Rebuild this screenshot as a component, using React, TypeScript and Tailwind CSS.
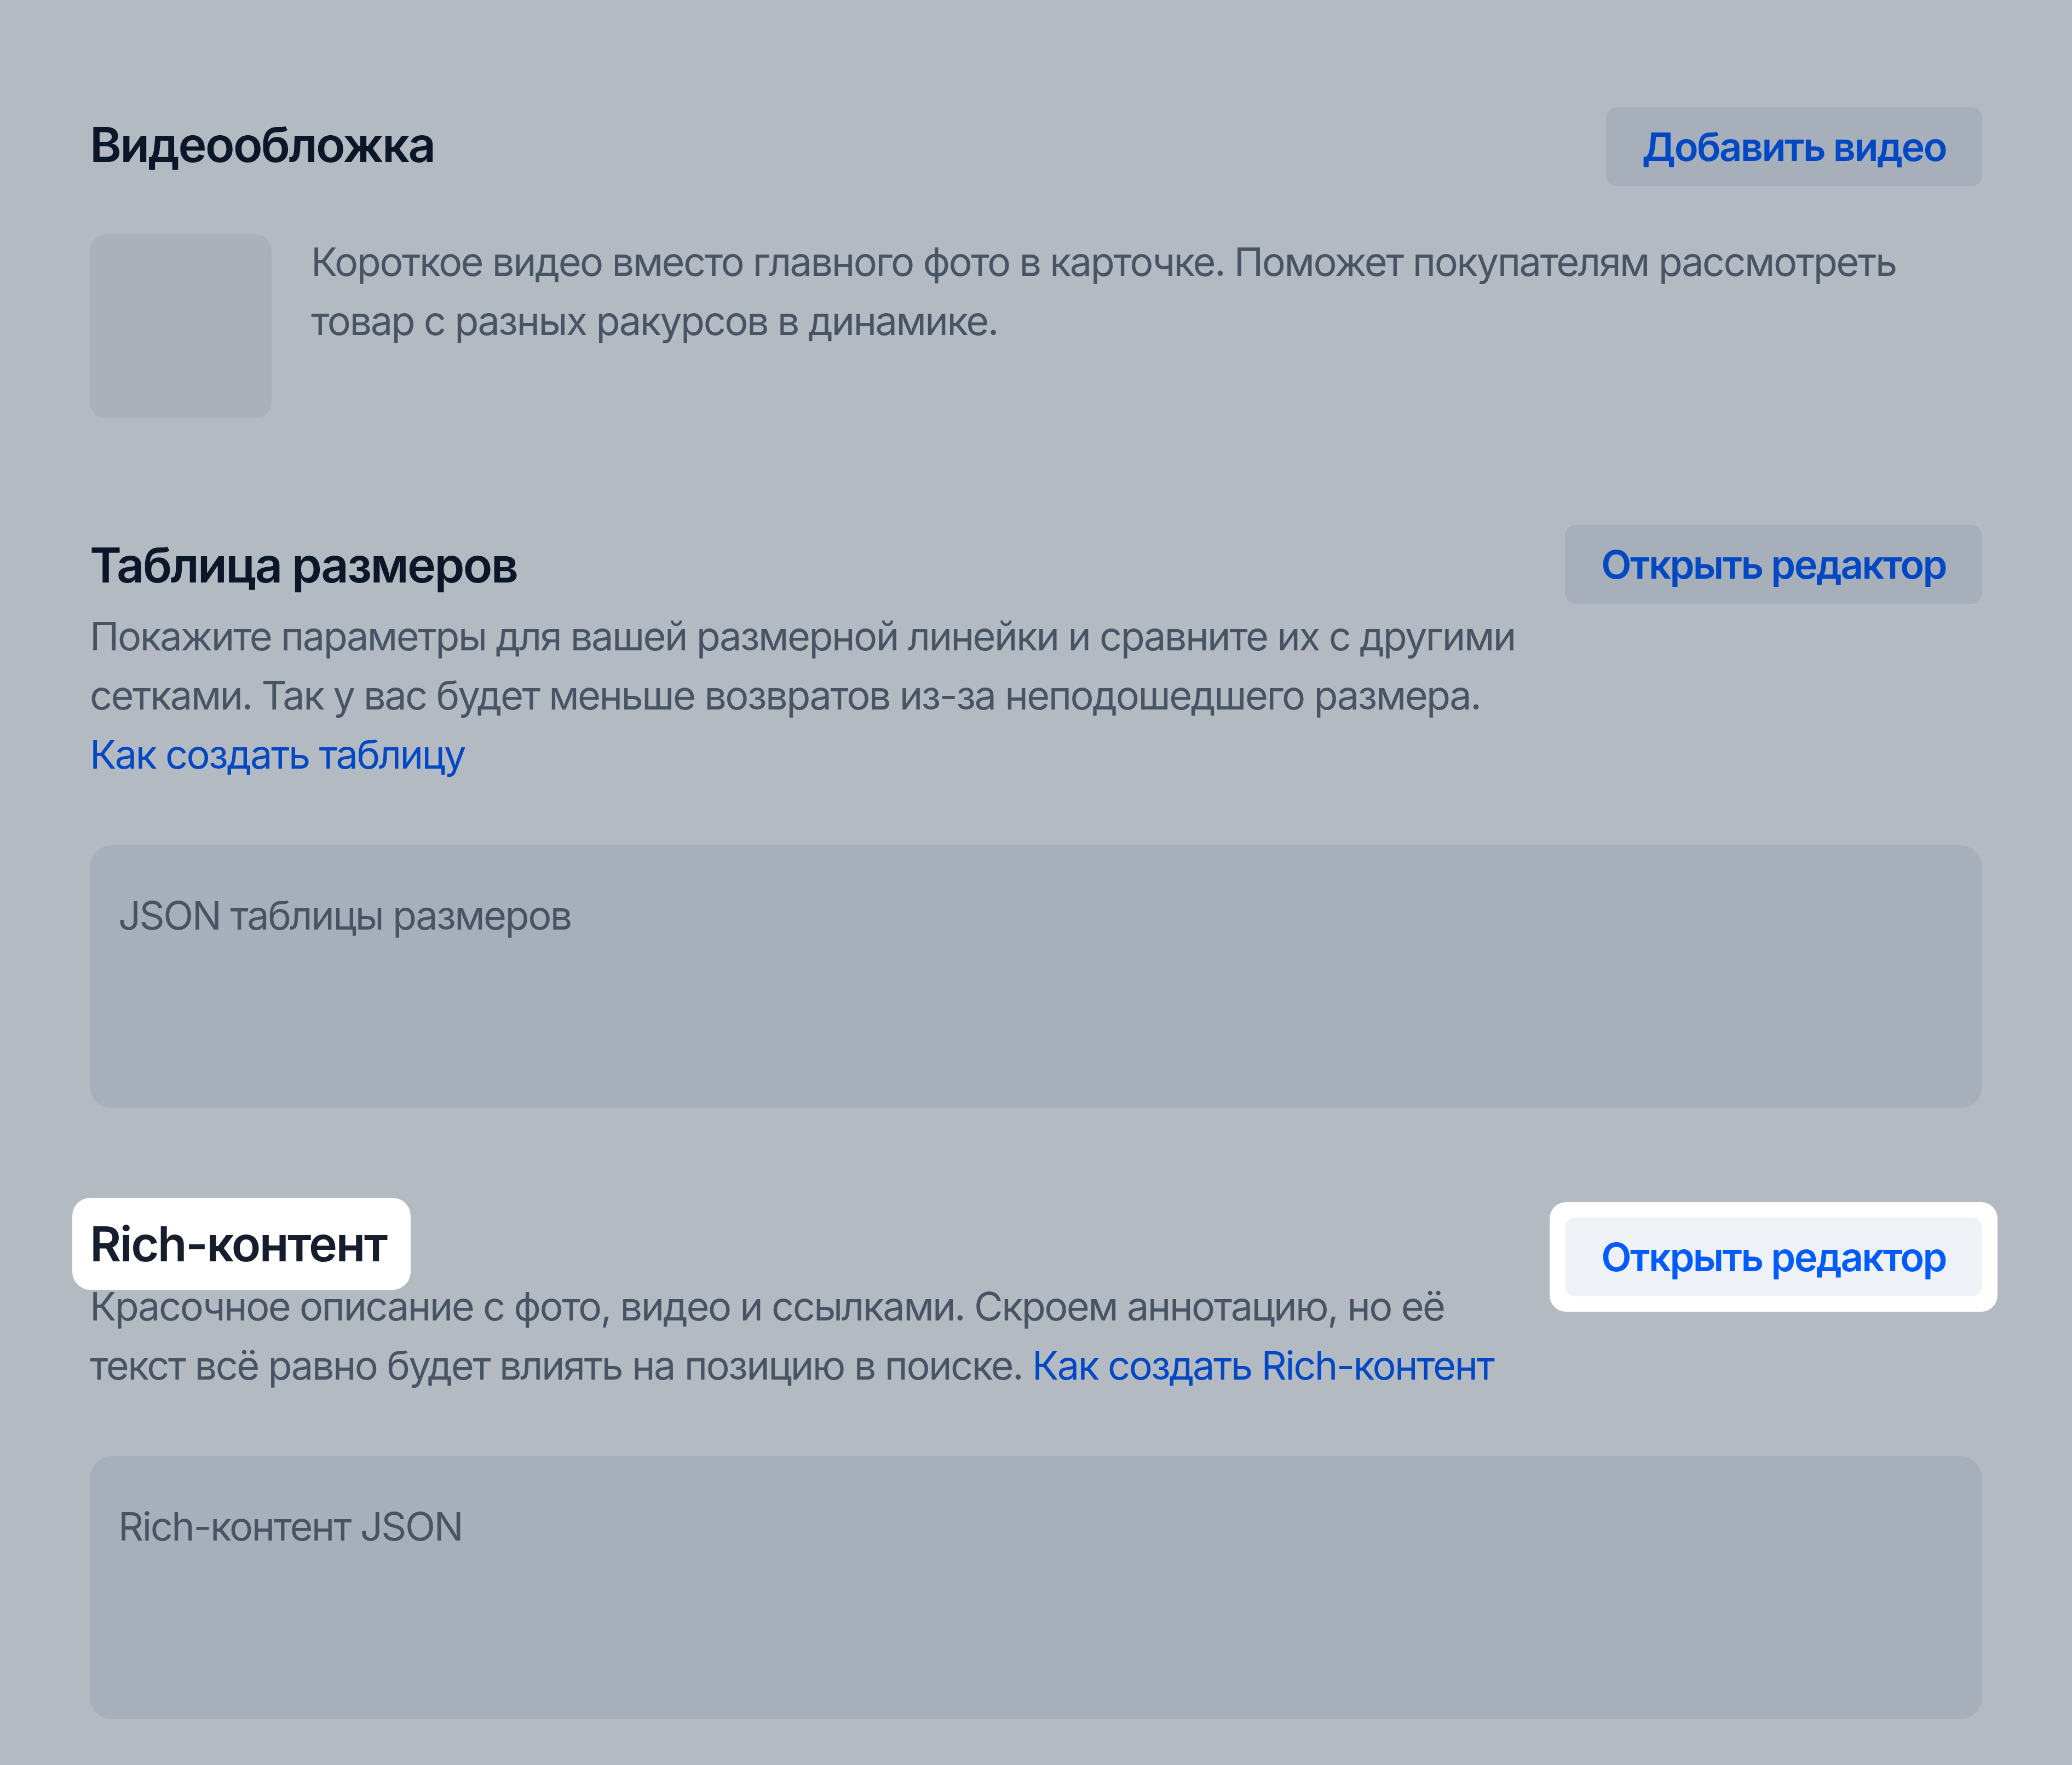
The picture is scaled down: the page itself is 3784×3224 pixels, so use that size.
export default function App() {
  return (
    <div className="min-h-screen w-full bg-[#b3bac2] font-['Inter',sans-serif] antialiased">
      <div className="flex flex-col px-[164px] pt-[196px] pb-[84px]">
        {/* Видеообложка */}
        <div className="flex items-center justify-between">
          <h2 className="mb-[8px] text-[88px] leading-[104px] font-semibold tracking-[-0.03em] text-[#0b1628]">Видеообложка</h2>
          <button className="h-[144px] rounded-[20px] bg-[#a7b0ba] px-[66px] text-[72px] font-semibold tracking-[-0.035em] text-[#0047c4]">
            Добавить видео
          </button>
        </div>
        <div className="mt-[88px] flex items-start gap-[72px]">
          <div className="h-[336px] w-[332px] shrink-0 rounded-[30px] bg-[#aab1bb]" />
          <p className="-mt-[4px] text-[72px] leading-[108px] tracking-[-0.035em] whitespace-nowrap text-[#485464]">
            Короткое видео вместо главного фото в карточке. Поможет покупателям рассмотреть
            <br />
            товар с разных ракурсов в динамике.
          </p>
        </div>

        {/* Таблица размеров */}
        <div className="mt-[195px] flex items-start justify-between gap-[64px]">
          <div className="min-w-0 flex-1 pt-[21px]">
            <h2 className="text-[88px] leading-[104px] font-semibold tracking-[-0.03em] text-[#0b1628]">Таблица размеров</h2>
            <p className="mt-[24px] text-[72px] leading-[108px] tracking-[-0.035em] whitespace-nowrap text-[#485464]">
              Покажите параметры для вашей размерной линейки и сравните их с другими
              <br />
              сетками. Так у вас будет меньше возвратов из-за неподошедшего размера.
              <br />
              <a className="text-[#0047c4]">Как создать таблицу</a>
            </p>
          </div>
          <button className="h-[144px] shrink-0 rounded-[20px] bg-[#a7b0ba] px-[66px] text-[72px] font-semibold tracking-[-0.035em] text-[#0047c4]">
            Открыть редактор
          </button>
        </div>
        <div className="mt-[112px] h-[480px] rounded-[40px] bg-[#a7b0ba] px-[52px] pt-[74px] text-[72px] leading-[108px] tracking-[-0.035em] text-[#485464]">
          JSON таблицы размеров
        </div>

        {/* Rich-контент — подсвечен */}
        <div className="mt-[196px] flex items-start justify-between gap-[64px]">
          <div className="flex min-w-0 flex-1 flex-col">
            <div className="-m-[32px] self-start rounded-[33px] bg-white py-[32px] pr-[44px] pl-[32px]">
              <h2 className="text-[88px] leading-[104px] font-semibold tracking-[-0.03em] text-[#161e2e]">Rich-контент</h2>
            </div>
            <p className="mt-[8px] text-[72px] leading-[108px] tracking-[-0.035em] whitespace-nowrap text-[#485464]">
              Красочное описание с фото, видео и ссылками. Скроем аннотацию, но её
              <br />
              текст всё равно будет влиять на позицию в поиске.{" "}
              <a className="text-[#0047c4]">Как создать Rich-контент</a>
            </p>
          </div>
          <div className="-mx-[28px] -mt-[24px] -mb-[28px] shrink-0 rounded-[30px] bg-white p-[28px]">
            <button className="h-[144px] rounded-[20px] bg-[#eef1f6] px-[66px] text-[72px] font-semibold tracking-[-0.035em] text-[#005bff]">
              Открыть редактор
            </button>
          </div>
        </div>
        <div className="mt-[112px] h-[480px] rounded-[40px] bg-[#a7b0ba] px-[52px] pt-[74px] text-[72px] leading-[108px] tracking-[-0.035em] text-[#485464]">
          Rich-контент JSON
        </div>
      </div>
    </div>
  );
}
